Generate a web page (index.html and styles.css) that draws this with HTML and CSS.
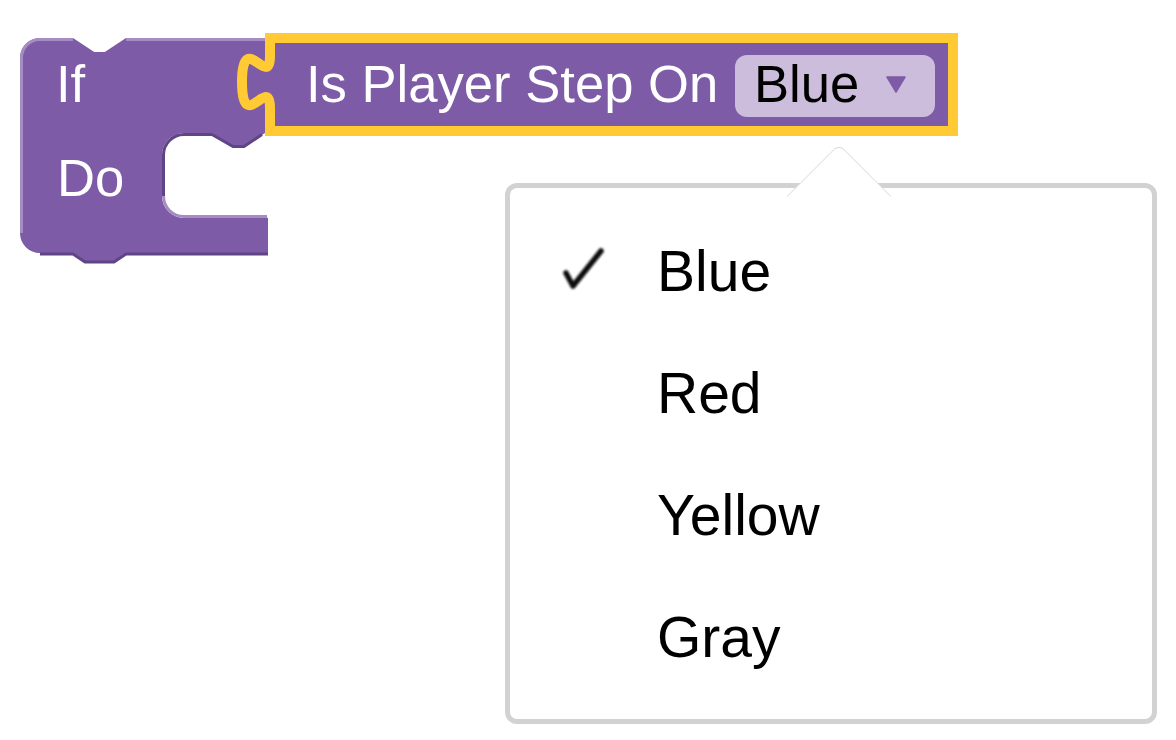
FILE: index.html
```html
<!DOCTYPE html>
<html>
<head>
<meta charset="utf-8">
<link rel="stylesheet" href="styles.css">
</head>
<body>
<div class="workspace">
  <svg class="canvas" width="1176" height="740" viewBox="0 0 1176 740">
    <g class="if-block">
      <path class="block-fill" d="M20,58 A20,20 0 0 1 40,38 H73 L94.2,52 H104.8 L126,38 H268 V133 H265 L244,147 H233 L212,133 H184 A22,22 0 0 0 162,155 V196 A22,22 0 0 0 184,218 H268 V253 H126 L114,261 H85 L73,253 H40 A20,20 0 0 1 20,233 Z"/>
      <path class="hl-light" d="M21.5,233 V58 A18.5,18.5 0 0 1 40,39.5 H73 M126,39.5 H266"/>
      <path class="hl-dark" d="M268,254 H126 L114,262 H85 L73,254 H40"/>
      <path class="hl-dark" d="M262,134.5 L244,146.5 H233 L212,134.5 H184 A20.5,20.5 0 0 0 163.5,155 V196"/>
      <path class="hl-light" d="M163.5,196 A20.5,20.5 0 0 0 184,216.5 H267"/>
      <text class="blk-text" x="56" y="102">If</text>
      <text class="blk-text" x="57" y="196">Do</text>
    </g>
    <g class="value-block">
      <path class="value-shape" d="M270,38 H953 V131 H270 V108.25 c0,-35 -28,28 -28,-26.25 s28,8.75 28,-26.25 Z"/>
      <text class="blk-text" x="306" y="102">Is Player Step On</text>
      <rect class="field" x="735" y="55" width="200" height="62" rx="12" ry="12"/>
      <text class="field-text" x="754" y="102">Blue</text>
      <path class="field-arrow" d="M887,77 H905 L896,92 Z"/>
    </g>
  </svg>

  <div class="menu">
    <div class="menu-arrow"></div>
    <div class="menu-item">
      <div class="check">
        <svg width="48" height="48" viewBox="0 0 48 48">
          <defs><filter id="soft" x="-20%" y="-20%" width="140%" height="140%"><feGaussianBlur stdDeviation="1.2"/></filter></defs>
          <path class="check-mark" d="M6,27 L13,40 L41,5" filter="url(#soft)"/>
        </svg>
      </div>
      <span class="label">Blue</span>
    </div>
    <div class="menu-item"><div class="check"></div><span class="label">Red</span></div>
    <div class="menu-item"><div class="check"></div><span class="label">Yellow</span></div>
    <div class="menu-item"><div class="check"></div><span class="label">Gray</span></div>
  </div>
</div>
</body>
</html>
```
FILE: styles.css
```css
html, body {
  margin: 0;
  padding: 0;
  background: #ffffff;
  overflow: hidden;
}

.workspace {
  position: relative;
  width: 1176px;
  height: 740px;
  font-family: "Liberation Sans", Arial, sans-serif;
}

.canvas {
  position: absolute;
  left: 0;
  top: 0;
  display: block;
}

.block-fill {
  fill: #7e5ba6;
}

.hl-light {
  fill: none;
  stroke: #a58dc4;
  stroke-width: 3;
}

.hl-dark {
  fill: none;
  stroke: #5f4585;
  stroke-width: 3;
}

.value-shape {
  fill: #7e5ba6;
  stroke: #ffca33;
  stroke-width: 10;
}

.blk-text {
  font-family: "Liberation Sans", Arial, sans-serif;
  font-size: 52.6px;
  fill: #ffffff;
}

.field {
  fill: #cbbddb;
}

.field-text {
  font-family: "Liberation Sans", Arial, sans-serif;
  font-size: 52.6px;
  fill: #000000;
}

.field-arrow {
  fill: #7e5ba6;
  stroke: #7e5ba6;
  stroke-width: 1.5;
  stroke-linejoin: round;
}

.menu {
  position: absolute;
  left: 505px;
  top: 183px;
  width: 652px;
  box-sizing: border-box;
  border: 5px solid #d2d2d2;
  border-radius: 12px;
  background: #ffffff;
  padding: 22px 0 21px 0;
  display: flex;
  flex-direction: column;
}

.menu-arrow {
  position: absolute;
  left: 292px;
  top: -29px;
  width: 74px;
  height: 74px;
  box-sizing: border-box;
  background: #ffffff;
  border-top: 1.5px solid #dadada;
  border-left: 1.5px solid #dadada;
  border-top-left-radius: 8px;
  transform: rotate(45deg);
}

.menu-item {
  position: relative;
  display: flex;
  align-items: flex-start;
  height: 122px;
  font-size: 57px;
  line-height: 122px;
  color: #000000;
}

.check {
  width: 147px;
  flex: none;
  box-sizing: border-box;
  padding: 36px 0 0 50px;
  line-height: 0;
}

.check-mark {
  fill: none;
  stroke: #111111;
  stroke-width: 5.5;
  stroke-linecap: round;
  stroke-linejoin: round;
}

.label {
  white-space: nowrap;
}
```
